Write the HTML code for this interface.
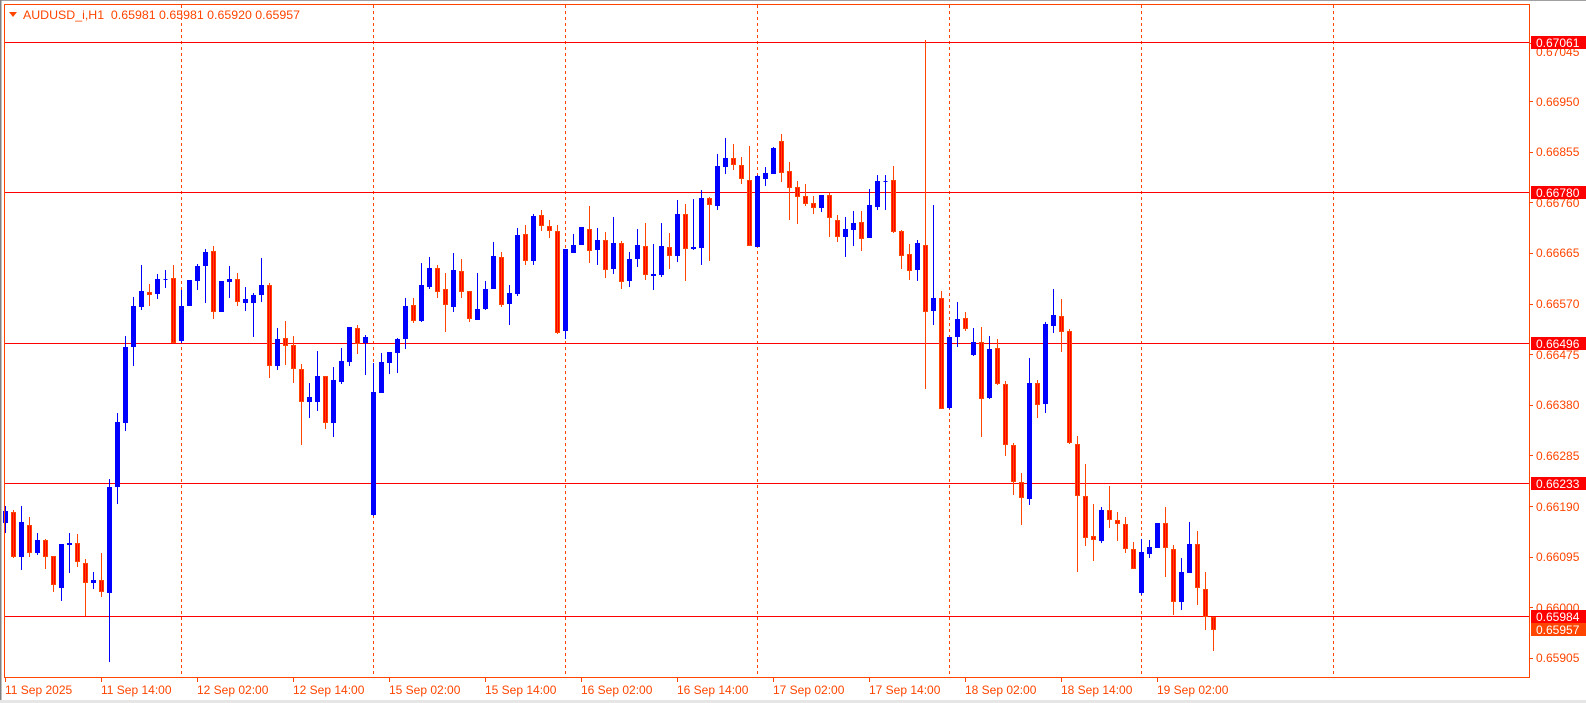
<!DOCTYPE html>
<html><head><meta charset="utf-8"><style>
html,body{margin:0;padding:0;background:#fff;overflow:hidden}
svg{display:block}
text{font-family:"Liberation Sans",sans-serif;font-size:12px}
</style></head><body>
<svg width="1586" height="703" xmlns="http://www.w3.org/2000/svg">
<rect x="0" y="0" width="1586" height="703" fill="#fff"/>
<rect x="0" y="0" width="1586" height="1" fill="#a0a0a0"/>
<rect x="0" y="0" width="1.5" height="703" fill="#808080"/>
<rect x="0" y="700" width="1586" height="3" fill="#e6e6e6"/>
<g stroke="#ff4500" stroke-dasharray="3,3" stroke-width="1">
<path d="M181.5 5V677M373.5 5V677M565.5 5V677M757.5 5V677M949.5 5V677M1141.5 5V677M1333.5 5V677"/>
</g>
<g stroke="#ff0000" stroke-width="1">
<path d="M5 42.5H1529M5 192.5H1529M5 343.5H1529M5 483.5H1529M5 616.5H1529"/>
</g>
<path fill="#0000ff" stroke="#0000ff" stroke-width="1" d="M5.5 506V533M3.5 511.5h4v11h-4zM21.5 506V570M19.5 522.5h4v34h-4zM37.5 533V555M35.5 540.5h4v12h-4zM61.5 544V601M59.5 544.5h4v43h-4zM69.5 533V573M67.5 543.5h4v1h-4zM93.5 572V589M91.5 580.5h4v2h-4zM109.5 479V662M107.5 487.5h4v105h-4zM117.5 413V504M115.5 422.5h4v64h-4zM125.5 336V431M123.5 347.5h4v75h-4zM133.5 297V366M131.5 306.5h4v40h-4zM141.5 265V310M139.5 291.5h4v15h-4zM157.5 274V299M155.5 279.5h4v14h-4zM165.5 270V288M163.5 279.5h4v0h-4zM181.5 290V343M179.5 306.5h4v34h-4zM189.5 280V306M187.5 280.5h4v25h-4zM197.5 264V290M195.5 266.5h4v14h-4zM205.5 249V303M203.5 252.5h4v13h-4zM221.5 281V312M219.5 281.5h4v30h-4zM229.5 266V298M227.5 279.5h4v2h-4zM245.5 287V311M243.5 299.5h4v3h-4zM253.5 293V337M251.5 295.5h4v7h-4zM261.5 258V302M259.5 285.5h4v9h-4zM277.5 328V370M275.5 339.5h4v26h-4zM309.5 383V418M307.5 397.5h4v4h-4zM317.5 351V411M315.5 376.5h4v25h-4zM333.5 367V437M331.5 380.5h4v42h-4zM341.5 348V384M339.5 361.5h4v20h-4zM349.5 327V366M347.5 327.5h4v34h-4zM365.5 335V375M363.5 337.5h4v5h-4zM373.5 363V516M371.5 392.5h4v122h-4zM381.5 353V393M379.5 362.5h4v30h-4zM389.5 352V374M387.5 352.5h4v10h-4zM397.5 338V373M395.5 339.5h4v13h-4zM405.5 298V349M403.5 306.5h4v32h-4zM421.5 263V322M419.5 285.5h4v35h-4zM429.5 257V289M427.5 268.5h4v18h-4zM453.5 253V312M451.5 270.5h4v36h-4zM477.5 273V320M475.5 309.5h4v10h-4zM485.5 281V310M483.5 289.5h4v19h-4zM493.5 242V289M491.5 256.5h4v32h-4zM509.5 285V325M507.5 293.5h4v10h-4zM517.5 228V296M515.5 235.5h4v58h-4zM533.5 214V265M531.5 216.5h4v44h-4zM565.5 249V339M563.5 249.5h4v81h-4zM573.5 234V253M571.5 245.5h4v7h-4zM581.5 227V245M579.5 227.5h4v17h-4zM597.5 228V265M595.5 240.5h4v9h-4zM613.5 217V274M611.5 243.5h4v25h-4zM629.5 252V287M627.5 259.5h4v21h-4zM637.5 229V267M635.5 245.5h4v13h-4zM653.5 244V290M651.5 274.5h4v1h-4zM661.5 223V277M659.5 246.5h4v28h-4zM677.5 200V262M675.5 214.5h4v41h-4zM693.5 199V250M691.5 247.5h4v1h-4zM701.5 190V265M699.5 198.5h4v49h-4zM717.5 154V210M715.5 166.5h4v39h-4zM725.5 138V174M723.5 158.5h4v8h-4zM757.5 175V247M755.5 176.5h4v70h-4zM765.5 167V186M763.5 173.5h4v5h-4zM773.5 147V174M771.5 148.5h4v25h-4zM821.5 195V212M819.5 195.5h4v12h-4zM845.5 217V257M843.5 229.5h4v7h-4zM853.5 211V246M851.5 223.5h4v6h-4zM869.5 189V238M867.5 205.5h4v32h-4zM877.5 175V210M875.5 181.5h4v25h-4zM885.5 175V210M883.5 181.5h4v0h-4zM917.5 240V281M915.5 243.5h4v26h-4zM933.5 205V325M931.5 298.5h4v12h-4zM949.5 337V409M947.5 337.5h4v70h-4zM957.5 302V347M955.5 319.5h4v17h-4zM973.5 328V356M971.5 342.5h4v12h-4zM989.5 336V399M987.5 349.5h4v48h-4zM1029.5 358V505M1027.5 383.5h4v115h-4zM1045.5 322V413M1043.5 324.5h4v79h-4zM1053.5 289V333M1051.5 315.5h4v10h-4zM1101.5 507V543M1099.5 510.5h4v30h-4zM1141.5 539V595M1139.5 552.5h4v40h-4zM1149.5 540V558M1147.5 547.5h4v6h-4zM1157.5 523V548M1155.5 523.5h4v24h-4zM1181.5 558V610M1179.5 572.5h4v29h-4zM1189.5 522V573M1187.5 544.5h4v28h-4z"/>
<path fill="#ff0000" stroke="#ff4500" stroke-width="1" d="M13.5 510V558M11.5 512.5h4v44h-4zM29.5 517V557M27.5 525.5h4v27h-4zM45.5 539V569M43.5 540.5h4v16h-4zM53.5 556V592M51.5 556.5h4v28h-4zM77.5 534V567M75.5 543.5h4v18h-4zM85.5 559V616M83.5 563.5h4v19h-4zM101.5 553V597M99.5 580.5h4v11h-4zM149.5 284V306M147.5 292.5h4v2h-4zM173.5 265V343M171.5 278.5h4v64h-4zM213.5 246V319M211.5 251.5h4v60h-4zM237.5 273V306M235.5 279.5h4v22h-4zM269.5 283V378M267.5 285.5h4v80h-4zM285.5 321V365M283.5 338.5h4v7h-4zM293.5 336V383M291.5 345.5h4v23h-4zM301.5 364V445M299.5 369.5h4v32h-4zM325.5 376V429M323.5 376.5h4v46h-4zM357.5 325V354M355.5 328.5h4v15h-4zM413.5 298V323M411.5 305.5h4v15h-4zM437.5 265V298M435.5 268.5h4v23h-4zM445.5 273V332M443.5 289.5h4v15h-4zM461.5 259V298M459.5 271.5h4v20h-4zM469.5 291V322M467.5 291.5h4v27h-4zM501.5 252V307M499.5 257.5h4v47h-4zM525.5 225V265M523.5 234.5h4v26h-4zM541.5 210V231M539.5 215.5h4v10h-4zM549.5 220V238M547.5 226.5h4v4h-4zM557.5 225V334M555.5 231.5h4v101h-4zM589.5 206V263M587.5 229.5h4v21h-4zM605.5 232V278M603.5 240.5h4v29h-4zM621.5 241V289M619.5 243.5h4v38h-4zM645.5 223V280M643.5 246.5h4v28h-4zM669.5 233V269M667.5 247.5h4v8h-4zM685.5 204V281M683.5 214.5h4v34h-4zM709.5 197V261M707.5 198.5h4v6h-4zM733.5 144V170M731.5 158.5h4v6h-4zM741.5 157V184M739.5 165.5h4v13h-4zM749.5 146V246M747.5 180.5h4v65h-4zM781.5 134V182M779.5 141.5h4v31h-4zM789.5 162V220M787.5 171.5h4v16h-4zM797.5 181V224M795.5 187.5h4v9h-4zM805.5 184V206M803.5 196.5h4v7h-4zM813.5 196V214M811.5 203.5h4v4h-4zM829.5 193V237M827.5 195.5h4v22h-4zM837.5 215V242M835.5 220.5h4v16h-4zM861.5 211V251M859.5 222.5h4v16h-4zM893.5 166V233M891.5 180.5h4v51h-4zM901.5 230V269M899.5 231.5h4v24h-4zM909.5 244V280M907.5 254.5h4v16h-4zM925.5 40V389M923.5 245.5h4v66h-4zM941.5 291V409M939.5 298.5h4v110h-4zM965.5 312V331M963.5 318.5h4v10h-4zM981.5 327V437M979.5 342.5h4v56h-4zM997.5 339V385M995.5 348.5h4v35h-4zM1005.5 381V456M1003.5 384.5h4v60h-4zM1013.5 443V495M1011.5 445.5h4v36h-4zM1021.5 473V525M1019.5 482.5h4v15h-4zM1037.5 380V418M1035.5 383.5h4v21h-4zM1061.5 299V352M1059.5 316.5h4v15h-4zM1069.5 329V444M1067.5 331.5h4v111h-4zM1077.5 436V572M1075.5 444.5h4v51h-4zM1085.5 464V546M1083.5 496.5h4v41h-4zM1093.5 504V561M1091.5 536.5h4v3h-4zM1109.5 486V528M1107.5 510.5h4v9h-4zM1117.5 512V541M1115.5 520.5h4v3h-4zM1125.5 517V553M1123.5 524.5h4v24h-4zM1133.5 542V569M1131.5 549.5h4v19h-4zM1165.5 507V577M1163.5 523.5h4v24h-4zM1173.5 545V615M1171.5 549.5h4v52h-4zM1197.5 531V605M1195.5 544.5h4v43h-4zM1205.5 572V630M1203.5 589.5h4v27h-4zM1213.5 617V651M1211.5 617.5h4v12h-4z"/>
<rect x="4.5" y="4.5" width="1525" height="673" fill="none" stroke="#ff4500" stroke-width="1"/>
<path d="M9 12h8l-4 5z" fill="#ff4500"/>
<text x="23" y="19" fill="#ff4500" textLength="277" lengthAdjust="spacingAndGlyphs">AUDUSD_i,H1&#160; 0.65981 0.65981 0.65920 0.65957</text>
<g stroke="#ff4500"><path d="M1530 43.5h3M1530 101.5h3M1530 152.5h3M1530 202.5h3M1530 253.5h3M1530 304.5h3M1530 354.5h3M1530 405.5h3M1530 455.5h3M1530 506.5h3M1530 557.5h3M1530 607.5h3M1530 658.5h3"/></g>
<g fill="#ff4500">
<text x="1536" y="56">0.67045</text>
<text x="1536" y="106">0.66950</text>
<text x="1536" y="156">0.66855</text>
<text x="1536" y="207">0.66760</text>
<text x="1536" y="257">0.66665</text>
<text x="1536" y="308">0.66570</text>
<text x="1536" y="359">0.66475</text>
<text x="1536" y="409">0.66380</text>
<text x="1536" y="460">0.66285</text>
<text x="1536" y="511">0.66190</text>
<text x="1536" y="561">0.66095</text>
<text x="1536" y="612">0.66000</text>
<text x="1536" y="662">0.65905</text>
</g>
<rect x="1531" y="36" width="55" height="13" fill="#ff0000"/>
<rect x="1531" y="186" width="55" height="13" fill="#ff0000"/>
<rect x="1531" y="337" width="55" height="13" fill="#ff0000"/>
<rect x="1531" y="477" width="55" height="13" fill="#ff0000"/>
<rect x="1531" y="610" width="55" height="13" fill="#ff0000"/>
<rect x="1531" y="623" width="55" height="13" fill="#ff4500"/>
<g fill="#fff">
<text x="1536" y="47">0.67061</text>
<text x="1536" y="197">0.66780</text>
<text x="1536" y="348">0.66496</text>
<text x="1536" y="488">0.66233</text>
<text x="1536" y="621">0.65984</text>
<text x="1536" y="634">0.65957</text>
</g>
<g stroke="#ff4500"><path d="M5.5 678v4M101.5 678v4M197.5 678v4M293.5 678v4M389.5 678v4M485.5 678v4M581.5 678v4M677.5 678v4M773.5 678v4M869.5 678v4M965.5 678v4M1061.5 678v4M1157.5 678v4"/></g>
<g fill="#ff4500">
<text x="5" y="694">11 Sep 2025</text>
<text x="101" y="694">11 Sep 14:00</text>
<text x="197" y="694">12 Sep 02:00</text>
<text x="293" y="694">12 Sep 14:00</text>
<text x="389" y="694">15 Sep 02:00</text>
<text x="485" y="694">15 Sep 14:00</text>
<text x="581" y="694">16 Sep 02:00</text>
<text x="677" y="694">16 Sep 14:00</text>
<text x="773" y="694">17 Sep 02:00</text>
<text x="869" y="694">17 Sep 14:00</text>
<text x="965" y="694">18 Sep 02:00</text>
<text x="1061" y="694">18 Sep 14:00</text>
<text x="1157" y="694">19 Sep 02:00</text>
</g>
</svg>
</body></html>
